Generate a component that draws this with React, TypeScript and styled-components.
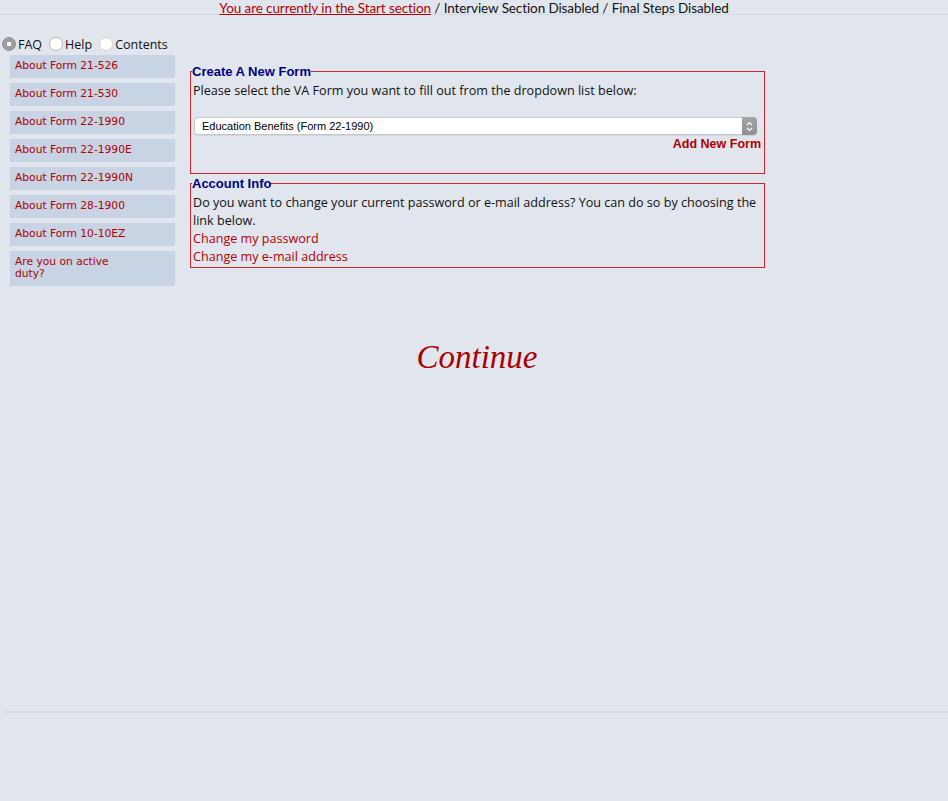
import React, { useState } from "react";
import styled, { createGlobalStyle } from "styled-components";

const GlobalStyle = createGlobalStyle`
  html, body {
    margin: 0;
    padding: 0;
    background: #e1e6ee;
  }
  body {
    font-family: "Open Sans", "DejaVu Sans", sans-serif;
    color: #111;
  }
`;

const Page = styled.div`
  min-height: 801px;
  display: flex;
  flex-direction: column;
`;

const SectionBar = styled.div`
  height: 14px;
  line-height: 16.5px;
  text-align: center;
  font-family: Lato, "Open Sans", sans-serif;
  font-size: 13.5px;
  letter-spacing: -0.1px;
  border-bottom: 1px solid #d3d7de;
  white-space: nowrap;
`;

const CurrentLink = styled.a`
  color: #b00000;
  text-decoration: underline;
`;

const RadioRow = styled.div`
  display: flex;
  align-items: center;
  margin: 21px 0 0 2px;
  height: 16px;
  font-size: 12.5px;
  font-family: "Open Sans", sans-serif;
`;

const RadioLabel = styled.label`
  display: flex;
  align-items: center;
  margin-right: 7px;
  cursor: pointer;
`;

const Radio = styled.input<{ $dim?: boolean }>`
  appearance: none;
  width: 14px;
  height: 14px;
  margin: 0 2px 0 0;
  border-radius: 50%;
  background: #fff;
  border: 1px solid ${(p) => (p.$dim ? "#d4d6da" : "#b4b6ba")};
  box-sizing: border-box;
  &:checked {
    background: radial-gradient(circle, #fff 0 2px, #9c9ea2 2.5px);
    border-color: #8e9094;
  }
`;

const Body = styled.div`
  display: flex;
  align-items: flex-start;
  padding-left: 10px;
`;

const Sidebar = styled.nav`
  width: 165px;
  display: flex;
  flex-direction: column;
  gap: 5px;
  margin-top: 3px;
`;

const SideItem = styled.a`
  display: block;
  background: #c8d3e4;
  color: #b00000;
  font-family: "DejaVu Sans", sans-serif;
  font-size: 10.7px;
  line-height: 12px;
  padding: 5px 5px 6px 5px;
  text-decoration: none;
  white-space: pre-line;
`;

const Main = styled.div`
  width: 575px;
  margin-left: 15px;
  display: flex;
  flex-direction: column;
  gap: 3px;
  margin-top: 13px;
`;

const Box = styled.fieldset<{ $height?: number }>`
  margin: 0;
  padding: 0 2px 1px 2px;
  border: 1px solid #cc2a2a;
  min-height: ${(p) => p.$height ?? 0}px;
  box-sizing: border-box;
  font-size: 12.6px;
  line-height: 18px;
`;

const Legend = styled.legend`
  padding: 0;
  margin-left: -1px;
  color: #000080;
  font-family: "Liberation Sans", Arial, sans-serif;
  font-weight: bold;
  font-size: 13px;
  line-height: 13px;
`;

const Text = styled.div`
  margin-top: 4px;
`;

const SelectWrap = styled.div`
  position: relative;
  margin: 17px 5px 0 1px;
  height: 18px;
`;

const Select = styled.select`
  appearance: none;
  width: 100%;
  height: 18px;
  border: 1px solid #c5c7cb;
  border-radius: 4px;
  background: #fff;
  font-family: "Liberation Sans", Arial, sans-serif;
  font-size: 11px;
  padding: 0 0 0 7px;
  color: #000;
  box-shadow: 0 1px 1px rgba(0, 0, 0, 0.08);
`;

const Stepper = styled.span`
  position: absolute;
  right: 0;
  top: 0;
  width: 15px;
  height: 18px;
  border-radius: 0 4px 4px 0;
  background: linear-gradient(#a3a5a9, #8c8e92);
  display: flex;
  align-items: center;
  justify-content: center;
  pointer-events: none;
`;

const AddRow = styled.div`
  text-align: right;
  padding-right: 1px;
`;

const AddLink = styled.a`
  color: #b00000;
  font-family: "Liberation Sans", Arial, sans-serif;
  font-weight: bold;
  font-size: 12.5px;
  text-decoration: none;
`;

const RedLink = styled.a`
  display: block;
  color: #b00000;
  text-decoration: none;
`;

const ContinueRow = styled.div`
  text-align: center;
  margin-top: 53px;
  padding-left: 6px;
`;

const ContinueLink = styled.a`
  color: #aa0000;
  font-family: "Liberation Serif", "DejaVu Serif", serif;
  font-style: italic;
  font-size: 33px;
  text-decoration: none;
`;

const Footer = styled.div`
  margin: 335px 0 0 4px;
  border-top: 2px solid #d9dde3;
`;

const sideItems = [
  "About Form 21-526",
  "About Form 21-530",
  "About Form 22-1990",
  "About Form 22-1990E",
  "About Form 22-1990N",
  "About Form 28-1900",
  "About Form 10-10EZ",
  "Are you on active\nduty?",
];

const App: React.FC = () => {
  const [panel, setPanel] = useState("faq");
  const [form, setForm] = useState("22-1990");

  return (
    <Page>
      <GlobalStyle />
      <SectionBar>
        <CurrentLink href="#">You are currently in the Start section</CurrentLink>
        {" / Interview Section Disabled / Final Steps Disabled"}
      </SectionBar>
      <RadioRow>
        <RadioLabel>
          <Radio type="radio" name="panel" checked={panel === "faq"} onChange={() => setPanel("faq")} />
          FAQ
        </RadioLabel>
        <RadioLabel>
          <Radio type="radio" name="panel" checked={panel === "help"} onChange={() => setPanel("help")} />
          Help
        </RadioLabel>
        <RadioLabel>
          <Radio $dim type="radio" name="panel" checked={panel === "contents"} onChange={() => setPanel("contents")} />
          Contents
        </RadioLabel>
      </RadioRow>
      <Body>
        <Sidebar>
          {sideItems.map((item) => (
            <SideItem key={item} href="#">
              {item}
            </SideItem>
          ))}
        </Sidebar>
        <Main>
          <Box $height={109}>
            <Legend>Create A New Form</Legend>
            <Text>Please select the VA Form you want to fill out from the dropdown list below:</Text>
            <SelectWrap>
              <Select value={form} onChange={(e) => setForm(e.target.value)}>
                <option value="22-1990">Education Benefits (Form 22-1990)</option>
                <option value="21-526">Compensation (Form 21-526)</option>
                <option value="10-10EZ">Health Benefits (Form 10-10EZ)</option>
              </Select>
              <Stepper>
                <svg width="7" height="11" viewBox="0 0 7 11">
                  <path d="M1 4 L3.5 1.5 L6 4 M1 7 L3.5 9.5 L6 7" stroke="#fff" strokeWidth="1.2" fill="none" />
                </svg>
              </Stepper>
            </SelectWrap>
            <AddRow>
              <AddLink href="#">Add New Form</AddLink>
            </AddRow>
          </Box>
          <Box>
            <Legend>Account Info</Legend>
            <Text>
              Do you want to change your current password or e-mail address? You can do so by choosing the link below.
            </Text>
            <RedLink href="#">Change my password</RedLink>
            <RedLink href="#">Change my e-mail address</RedLink>
          </Box>
        </Main>
      </Body>
      <ContinueRow>
        <ContinueLink href="#">Continue</ContinueLink>
      </ContinueRow>
      <Footer />
    </Page>
  );
};

export default App;
